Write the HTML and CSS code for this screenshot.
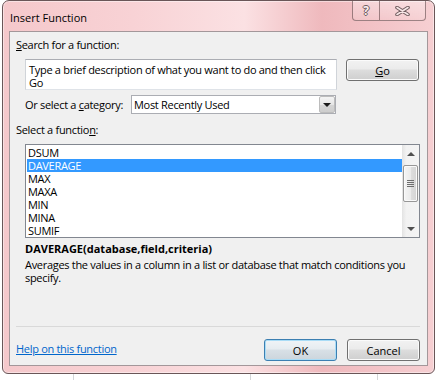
FILE: index.html
```html
<!DOCTYPE html>
<html lang="en">
<head>
    <meta charset="UTF-8">
    <title>Insert Function</title>
    <link rel="stylesheet" href="styles.css">
</head>
<body>
    <div class="window">
        <!-- Title bar -->
        <div class="titlebar">
            <span class="title">Insert Function</span>
            <div class="caption-buttons">
                <div class="cap help">?</div>
                <div class="cap close">
                    <svg width="15" height="10" viewBox="0 0 15 10">
                        <path d="M2 1.5 L13 8.5 M13 1.5 L2 8.5" stroke="#6f5c5e" stroke-width="3.6" stroke-linecap="round"/>
                        <path d="M2 1.5 L13 8.5 M13 1.5 L2 8.5" stroke="#f7e6e7" stroke-width="1.6" stroke-linecap="round"/>
                    </svg>
                </div>
            </div>
        </div>

        <!-- Dialog body -->
        <div class="client">
            <div class="label"><u>S</u>earch for a function:</div>
            <div class="search-row">
                <div class="textbox">Type a brief description of what you want to do and then click<br>Go</div>
                <button class="btn"><u>G</u>o</button>
            </div>
            <div class="category-row">
                <span class="category-label">Or select a <u>c</u>ategory:</span>
                <div class="select">
                    <span class="select-text">Most Recently Used</span>
                    <span class="select-arrow"><i></i></span>
                </div>
            </div>
            <div class="label label-functions">Select a functio<u>n</u>:</div>
            <div class="listbox">
                <ul class="items">
                    <li>DSUM</li>
                    <li class="selected">DAVERAGE</li>
                    <li>MAX</li>
                    <li>MAXA</li>
                    <li>MIN</li>
                    <li>MINA</li>
                    <li>SUMIF</li>
                </ul>
                <div class="scrollbar">
                    <div class="sb-arrow"><i class="up"></i></div>
                    <div class="sb-track">
                        <div class="sb-thumb"><span class="grip"></span></div>
                    </div>
                    <div class="sb-arrow"><i class="down"></i></div>
                </div>
            </div>
            <div class="signature">DAVERAGE(database,field,criteria)</div>
            <p class="desc">Averages the values in a column in a list or database that match conditions you<br>specify.</p>

            <div class="footer">
                <a href="#" class="help-link">Help on this function</a>
                <div class="buttons">
                    <button class="btn default">OK</button>
                    <button class="btn">Cancel</button>
                </div>
            </div>
        </div>
    </div>
</body>
</html>
```

FILE: styles.css
```css
* {
    box-sizing: border-box;
}

body {
    margin: 0;
    width: 436px;
    height: 380px;
    overflow: hidden;
    font-family: 'Open Sans', 'Noto Sans', sans-serif;
    font-size: 11px;
    letter-spacing: -0.3px;
    color: #000;
    background-color: #fff;
    background-image:
        linear-gradient(to right, transparent 73px, #d4d6d8 73px, #d4d6d8 74px, transparent 74px),
        linear-gradient(to right, transparent 250px, #d4d6d8 250px, #d4d6d8 251px, transparent 251px),
        linear-gradient(to right, transparent 377px, #d4d6d8 377px, #d4d6d8 378px, transparent 378px);
}

/* Window frame */
.window {
    margin-left: 2px;
    width: 433px;
    height: 374px;
    border: 1px solid #6a5658;
    border-radius: 7px 7px 6px 6px;
    background: linear-gradient(to right, #f5c8cb 0%, #f8d2d5 30%, #fbe1e3 56%, #efb9bd 74%, #f3c4c8 88%, #f6cfd2 100%);
    box-shadow: inset 0 0 0 1px rgba(255, 255, 255, 0.45);
    padding: 0 6px 7px 6px;
    display: flex;
    flex-direction: column;
}

.titlebar {
    height: 30px;
    margin: 0 -6px;
    display: flex;
    align-items: flex-start;
}

.title {
    margin: 9px 0 0 7px;
    line-height: 15px;
    letter-spacing: 0;
}

.caption-buttons {
    margin-left: auto;
    margin-right: 8px;
    display: flex;
}

.cap {
    height: 20px;
    border: 1px solid rgba(95, 70, 72, 0.6);
    border-top: none;
    background: linear-gradient(rgba(255, 255, 255, 0.35), rgba(255, 255, 255, 0.08));
    display: flex;
    justify-content: center;
    align-items: center;
}

.cap.help {
    width: 28px;
    border-radius: 0 0 0 4px;
    font-weight: bold;
    font-size: 12px;
    color: #fbeff0;
    text-shadow: 1px 0 #6f5c5e, -1px 0 #6f5c5e, 0 1px #6f5c5e, 0 -1px #6f5c5e;
    padding-bottom: 1px;
}

.cap.close {
    width: 46px;
    border-left: none;
    border-radius: 0 0 4px 0;
}

/* Client area */
.client {
    flex: 1;
    background: #f0f0f0;
    border: 1px solid #a3979a;
    padding: 5px 7px 4px 6px;
    display: flex;
    flex-direction: column;
}

.label {
    line-height: 15px;
}

.search-row {
    margin: 7px 0 0 9px;
    display: flex;
    align-items: flex-start;
    gap: 9px;
}

.textbox {
    width: 312px;
    height: 31px;
    background: #fff;
    border: 1px solid #abadb3;
    border-color: #abadb3 #d0d4d9 #dfe3e8 #d0d4d9;
    padding: 3px 3px;
    line-height: 13px;
    white-space: nowrap;
}

.category-row {
    margin: 5px 0 0 9px;
    display: flex;
    align-items: center;
    height: 19px;
}

.category-label {
    width: 106px;
}

.select {
    width: 205px;
    height: 19px;
    background: #fff;
    border: 1px solid #abadb3;
    display: flex;
}

.select-text {
    flex: 1;
    padding-left: 2px;
    line-height: 17px;
}

.select-arrow {
    width: 16px;
    height: 17px;
    border: 1px solid #bcbcbc;
    border-radius: 2px;
    background: linear-gradient(#f4f4f4, #e6e6e6 50%, #d6d6d6 51%, #cdcdcd);
    display: flex;
    justify-content: center;
    align-items: center;
}

.select-arrow i {
    width: 0;
    height: 0;
    border-left: 4px solid transparent;
    border-right: 4px solid transparent;
    border-top: 4px solid #1a1a1a;
}

.label-functions {
    margin-top: 8px;
}

/* Function list */
.listbox {
    margin: 7px 0 0 9px;
    width: 395px;
    height: 94px;
    background: #fff;
    border: 1px solid #828790;
    display: flex;
}

.items {
    flex: 1;
    list-style: none;
    margin: 0;
    padding: 1px 0 0 1px;
}

.items li {
    height: 13px;
    line-height: 13px;
    padding-left: 1px;
}

.items li.selected {
    background: #3399ff;
    color: #fff;
}

.scrollbar {
    width: 17px;
    display: flex;
    flex-direction: column;
    background: linear-gradient(to right, #e3e3e3, #f2f2f2 25%, #f4f4f4);
}

.sb-arrow {
    height: 17px;
    display: flex;
    justify-content: center;
    align-items: center;
}

.sb-arrow i {
    width: 0;
    height: 0;
    border-left: 4px solid transparent;
    border-right: 4px solid transparent;
}

.sb-arrow i.up {
    border-bottom: 4px solid #505050;
}

.sb-arrow i.down {
    border-top: 4px solid #505050;
}

.sb-track {
    flex: 1;
}

.sb-thumb {
    margin: 3px 0 0 1px;
    width: 15px;
    height: 37px;
    border: 1px solid #979797;
    border-radius: 2px;
    background: linear-gradient(to right, #f5f5f5, #ebebeb 50%, #dedede 51%, #d4d4d4);
    box-shadow: inset 0 0 0 1px #fafafa;
    display: flex;
    justify-content: center;
    align-items: center;
}

.grip {
    width: 7px;
    height: 7px;
    background: repeating-linear-gradient(#6e6e6e 0, #6e6e6e 1px, transparent 1px, transparent 2px);
}

.signature {
    margin: 3px 0 0 9px;
    line-height: 16px;
    font-weight: bold;
    letter-spacing: 0;
}

.desc {
    margin: 1px 0 0 9px;
    line-height: 13px;
}

/* Bottom row */
.footer {
    margin-top: auto;
    border-top: 1px solid #d9d9d9;
    padding-top: 12px;
    display: flex;
    align-items: flex-start;
}

.help-link {
    margin-top: 2px;
    line-height: 15px;
    color: #0066cc;
}

.buttons {
    margin-left: auto;
    display: flex;
    gap: 10px;
}

.btn {
    font: inherit;
    color: #000;
    width: 73px;
    height: 22px;
    padding: 0;
    border: 1px solid #707070;
    border-radius: 3px;
    background: linear-gradient(#f2f2f2, #ebebeb 45%, #dddddd 50%, #cfcfcf);
    box-shadow: inset 0 0 0 1px #fbfbfb;
}

.btn.default {
    border-color: #3c7fb1;
    background: linear-gradient(#f0f4f7, #e6ecf0 45%, #d8e0e6 50%, #ccd5dc);
    box-shadow: inset 0 0 0 1px #a9dcf6;
}
```
